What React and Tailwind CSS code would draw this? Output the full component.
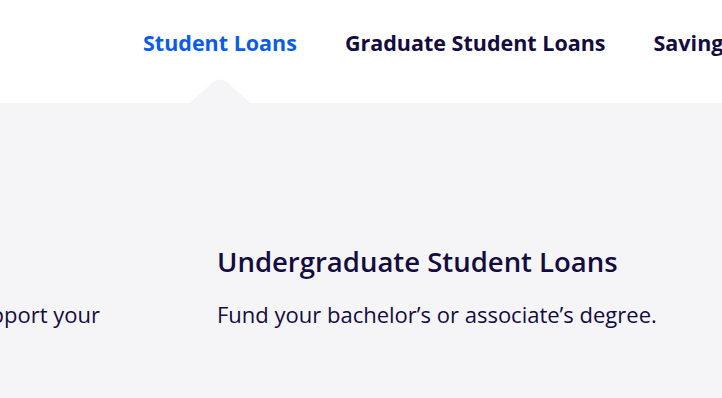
import React from "react";

const navItems = ["Student Loans", "Graduate Student Loans", "Savings Accounts"];

export default function App() {
      return (
            <div
                  className="w-[722px] h-[398px] overflow-hidden bg-[#f5f5f8] text-[#140c3f]"
                  style={{ fontFamily: '"Open Sans", "Liberation Sans", sans-serif' }}
            >
                  {/* Top nav */}
                  <header className="relative h-[103px] bg-white">
                        <nav className="flex items-center gap-[48px] pl-[143px] pt-[29px] whitespace-nowrap">
                              {navItems.map((item, i) => (
                                    <a
                                          key={item}
                                          href="#"
                                          className={`text-[21.5px] font-bold leading-[28px] ${
                                                i === 0 ? "text-[#0a5ce6]" : "text-[#140c3f]"
                                          }`}
                                    >
                                          {item}
                                    </a>
                              ))}
                        </nav>
                        {/* Active tab notch */}
                        <svg
                              className="absolute left-[189px] top-[79px]"
                              width="62"
                              height="25"
                              viewBox="0 0 62 25"
                        >
                              <path
                                    d="M0 25 L24 3 Q31 -2 38 3 L62 25 Z"
                                    fill="#f5f5f8"
                              />
                        </svg>
                  </header>

                  {/* Panel */}
                  <section className="flex pt-[141px]">
                        <div className="w-[100px] shrink-0 mr-[117px] flex flex-col items-end">
                              <div className="h-[55px]" />
                              <p className="text-[22px] leading-[30px] whitespace-nowrap">
                                    Private student loans that support your
                              </p>
                        </div>
                        <div className="flex flex-col whitespace-nowrap">
                              <h3 className="text-[27.5px] font-semibold leading-[36px] mb-[19px]">
                                    Undergraduate Student Loans
                              </h3>
                              <p className="text-[22px] leading-[30px]">
                                    Fund your bachelor’s or associate’s degree.
                              </p>
                        </div>
                  </section>
            </div>
      );
}
